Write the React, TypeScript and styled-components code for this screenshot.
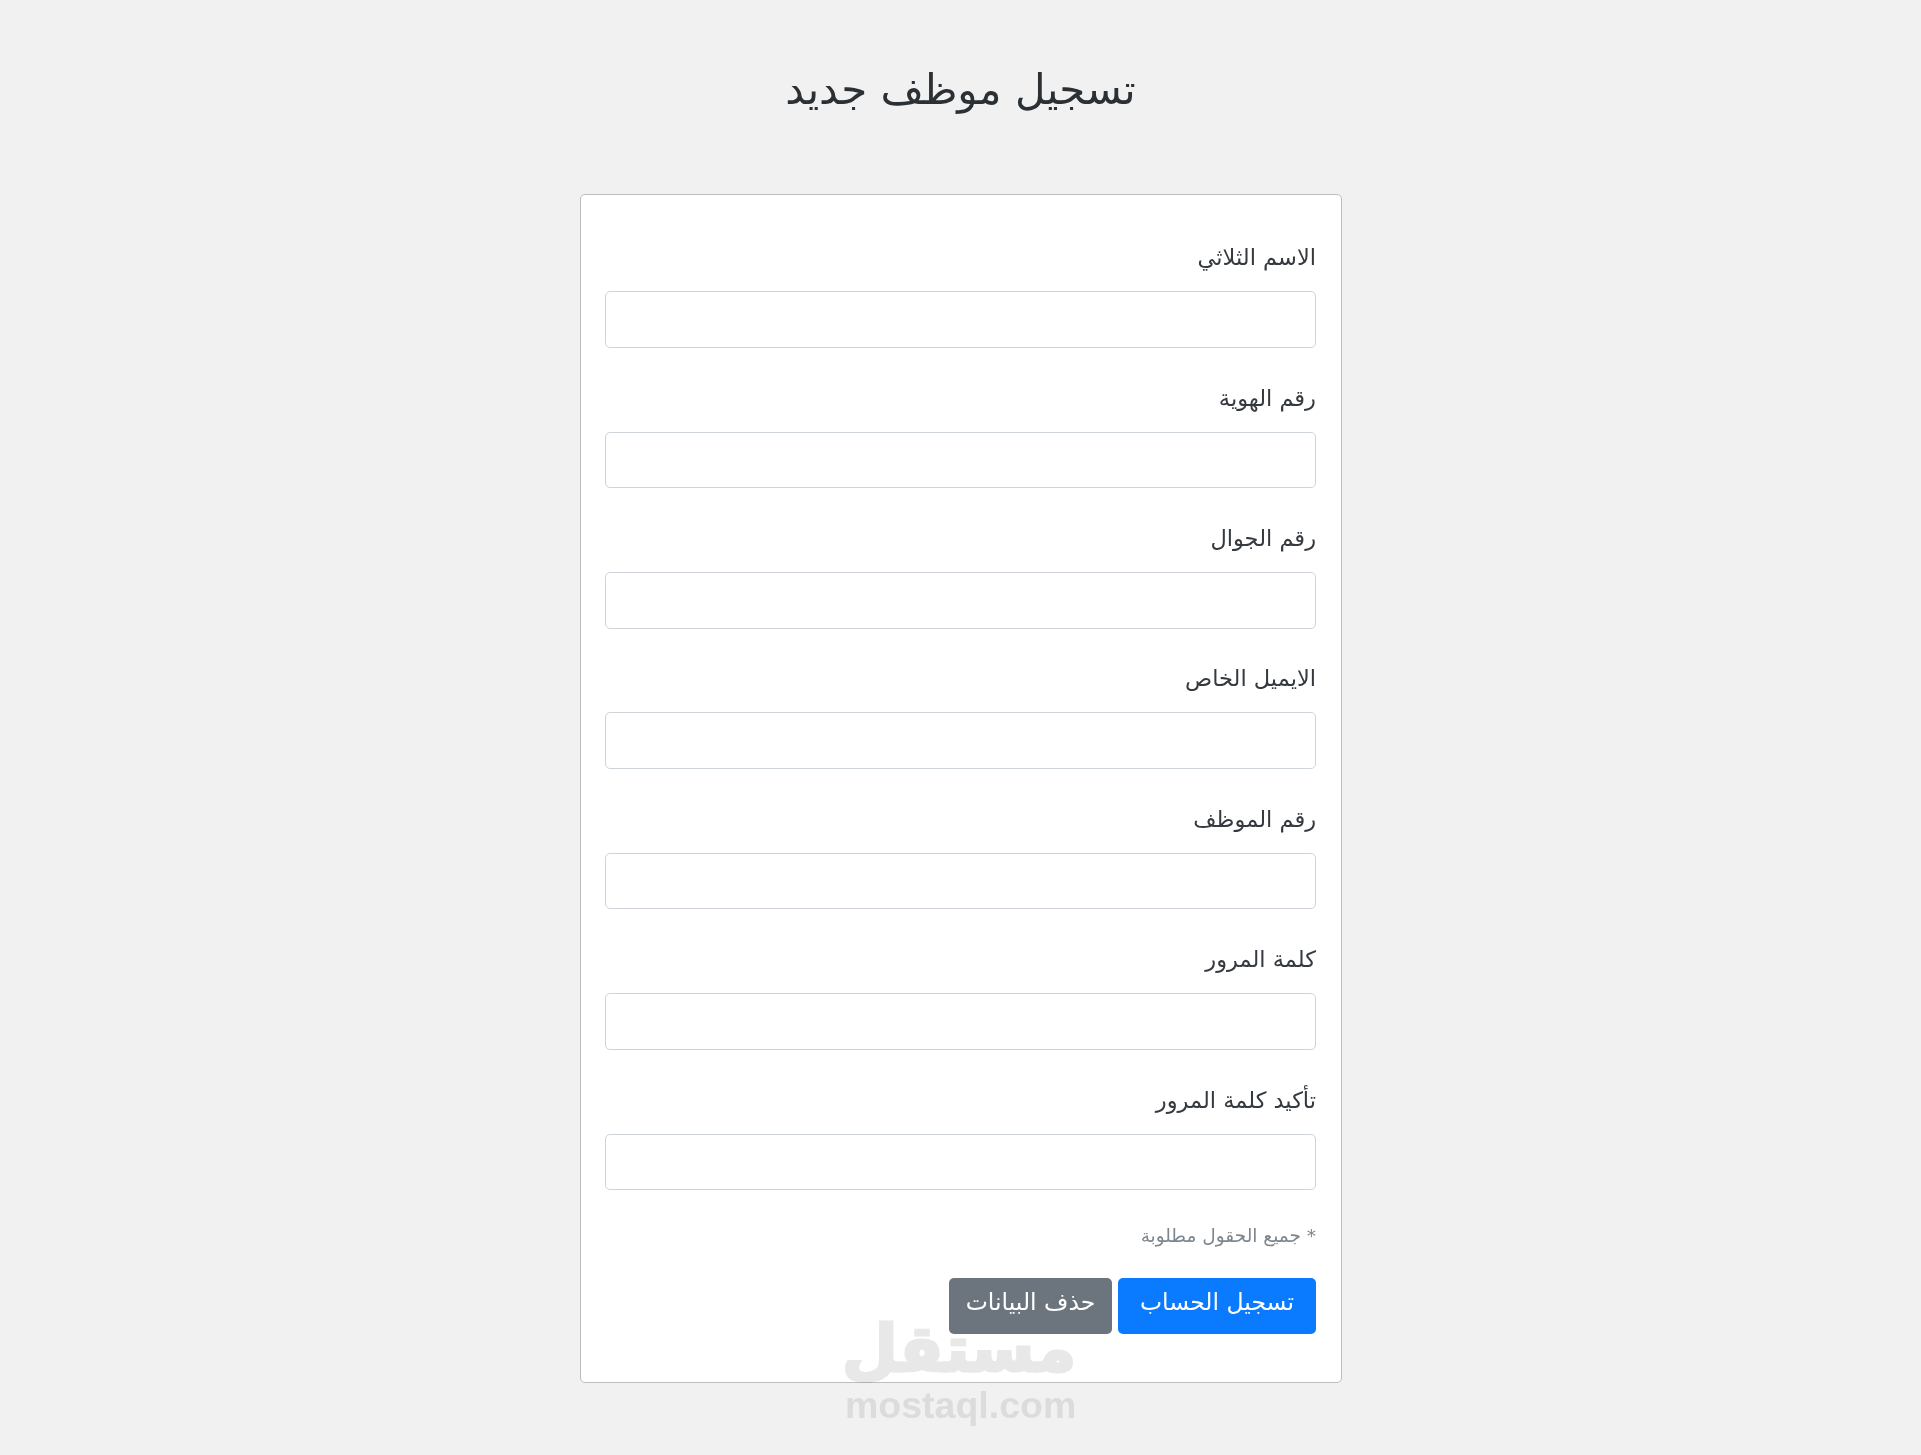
import React from 'react'
import styled, { createGlobalStyle } from 'styled-components'

const labels = [
	'الاسم الثلاثي',
	'رقم الهوية',
	'رقم الجوال',
	'الايميل الخاص',
	'رقم الموظف',
	'كلمة المرور',
	'تأكيد كلمة المرور',
]

const GlobalStyle = createGlobalStyle`
	html, body {
		margin: 0;
		padding: 0;
		background: #f1f1f1;
	}
	body {
		font-family: 'DejaVu Sans', 'Noto Sans', sans-serif;
		color: #212529;
	}
`

const Page = styled.div`
	position: relative;
	height: 1455px;
	overflow: hidden;
	direction: rtl;
	padding-top: 62px;
	box-sizing: border-box;
`

const Title = styled.h1`
	margin: 0 0 74px;
	height: 58px;
	line-height: 56px;
	text-align: center;
	font-size: 42px;
	font-weight: 400;
	color: #2b3035;
`

const Card = styled.form`
	width: 762px;
	height: 1189px;
	box-sizing: border-box;
	margin: 0 auto;
	padding: 42.3px 24.5px 0;
	background: #fff;
	border: 1px solid #bdbdbd;
	border-radius: 5px;
`

const Field = styled.div`
	height: 140.4px;
`

const Label = styled.label`
	display: block;
	height: 54px;
	line-height: 40px;
	font-size: 22.5px;
	color: #343a40;
`

const Input = styled.input`
	display: block;
	width: 100%;
	height: 56.5px;
	box-sizing: border-box;
	background: #fff;
	border: 1px solid #ced4da;
	border-radius: 5px;
`

const Hint = styled.small`
	display: block;
	height: 58px;
	line-height: 32px;
	font-size: 18.5px;
	color: #7d868d;
`

const Actions = styled.div`
	display: flex;
	gap: 6px;
`

const Button = styled.button<{ $variant: 'primary' | 'secondary' }>`
	height: 56px;
	width: ${(p) => (p.$variant === 'primary' ? '198px' : '163px')};
	padding: 0 0 8px;
	border: 0;
	border-radius: 5px;
	font: inherit;
	font-size: 23.5px;
	color: #fff;
	background: ${(p) => (p.$variant === 'primary' ? '#0a7bff' : '#6c757d')};
`

const Watermark = styled.div`
	position: absolute;
	left: 845px;
	top: 1322px;
	width: 231px;
	text-align: center;
	pointer-events: none;
	mix-blend-mode: multiply;
`

const WatermarkArabic = styled.div`
	height: 54px;
	margin-bottom: 11px;
	font-size: 64px;
	line-height: 54px;
	font-weight: 700;
	color: #e8e8e8;
	-webkit-text-stroke: 3px #e8e8e8;
	white-space: nowrap;
`

const WatermarkLatin = styled.div`
	direction: ltr;
	font-family: 'Liberation Sans', sans-serif;
	font-size: 37.5px;
	line-height: 36px;
	font-weight: 700;
	color: #e9e9e9;
	white-space: nowrap;
`

export default function App() {
	return (
		<Page>
			<GlobalStyle />
			<Title>تسجيل موظف جديد</Title>
			<Card>
				{labels.map((label) => (
					<Field key={label}>
						<Label>{label}</Label>
						<Input />
					</Field>
				))}
				<Hint>* جميع الحقول مطلوبة</Hint>
				<Actions>
					<Button type="button" $variant="primary">
						تسجيل الحساب
					</Button>
					<Button type="button" $variant="secondary">
						حذف البيانات
					</Button>
				</Actions>
			</Card>
			<Watermark>
				<WatermarkArabic>مستقل</WatermarkArabic>
				<WatermarkLatin>mostaql.com</WatermarkLatin>
			</Watermark>
		</Page>
	)
}
